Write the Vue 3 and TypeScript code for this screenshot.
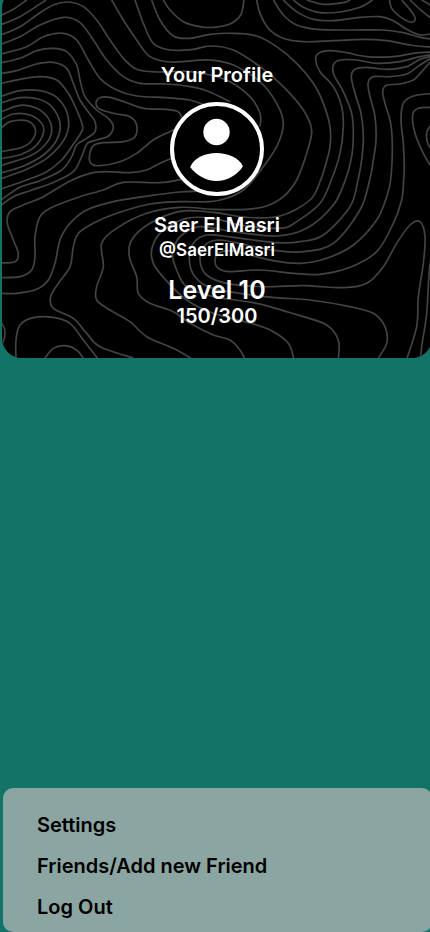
<script setup lang="ts">
type Point = [number, number]

interface Profile {
  name: string
  handle: string
  level: number
  points: number
  goal: number
}

const profile: Profile = {
  name: 'Saer El Masri',
  handle: '@SaerElMasri',
  level: 10,
  points: 150,
  goal: 300,
}

const menu: string[] = ['Settings', 'Friends/Add new Friend', 'Log Out']

// Contour lines of the topographic backdrop, as "x,y" pairs.
const contours: string[] = [
  '0,48 40,28 80,0',
  '0,75 60,50 138,0',
  '0,106 60,80 110,45 160,15 205,6 250,20 290,60 330,120 370,175 410,208 470,216 560,214 630,225 690,245 750,290 780,340 780,380',
  '0,134 60,110 120,75 190,52 240,68 280,120 320,180 370,230 420,250 500,252 560,258 620,272 690,305',
  '0,163 80,140 130,110 190,100 230,120 265,180 300,235 350,270 410,288 500,293 570,300 620,318',
  '335,0 370,60 410,120 450,170 510,186 580,182 630,180 700,195 780,245 830,310 850,370 830,440 775,520 730,570 680,595 630,605 540,605 450,612 350,640 280,670 235,700 220,740 210,800 175,850 152,890 160,925 220,955 260,1000 300,1040 400,1074',
  '405,0 430,70 460,130 510,150 580,148 630,138 700,150 780,200 850,260 910,330 935,390 920,460 890,540 850,590 800,618 740,628 640,628 540,622 440,640 350,685 305,730 310,800 290,860 290,900 330,930 390,965 440,1010 520,1045 578,1078',
  '455,0 480,60 520,108 570,115 630,103 700,100 770,108 830,140 890,190 940,250 970,310 990,380 990,440 975,500 962,540 930,600 840,648 740,652 640,637 540,634 450,670 395,720 388,770 410,830 415,880 450,910 520,935 570,970 640,1005 690,1020 720,1050 735,1078',
  '490,0 510,30 550,65 600,80 640,82 690,72 722,45 732,0',
  '770,0 780,40 805,85 850,115 910,125 1000,122 1090,118 1160,122 1230,135 1300,142',
  '820,0 850,45 890,75 950,88 1050,90 1150,90 1210,98 1260,112 1300,118',
  '850,0 890,35 940,58 1000,62 1080,52 1140,50 1180,62 1220,88 1260,105 1300,100',
  '880,0 910,22 960,38 1020,36 1080,22 1118,0',
  '920,0 970,13 1030,8 1050,0',
  '1168,0 1175,25 1200,50 1230,66 1246,58 1235,35 1205,0',
  '1230,0 1260,28 1300,60',
  '1265,0 1300,20',
  '1300,156 1240,160 1180,170 1100,170 1040,158 990,152 955,160 947,180 960,215 1000,260 1025,320 1030,380 1020,460 994,540 960,610 890,665 840,685 720,675 640,655 560,655 490,690 457,740 460,790 500,843 560,900 640,940 760,972 820,995 865,1030 882,1078',
  '1300,163 1250,172 1200,185 1130,190 1070,180 1020,180 1000,195 1002,225 1030,275 1055,340 1060,400 1055,470 1036,540 1000,615 920,685 830,708 700,695 600,680 540,710 518,760 530,810 560,860 640,890 770,910 910,950 980,975 1015,1020 1015,1078',
  '1300,168 1260,178 1220,200 1160,208 1100,202 1065,208 1054,230 1065,280 1083,340 1090,410 1085,480 1074,540 1050,620 970,705 900,725 830,728 700,712 620,705 580,730 568,780 585,830 640,865 795,890 930,900 1050,920 1120,940 1155,980 1160,1030 1132,1078',
  '1300,170 1260,195 1220,222 1170,230 1120,230 1104,250 1110,290 1125,350 1128,420 1120,480 1109,540 1080,630 1000,730 910,755 830,752 740,735 660,720 615,735 600,780 620,825 680,850 790,860 910,857 1030,863 1100,850 1150,800 1190,730 1230,675 1260,665 1275,710 1270,790 1255,890 1250,980 1220,1078',
  '1300,175 1265,215 1240,240 1200,252 1160,256 1148,275 1155,310 1172,370 1177,440 1172,540 1160,590 1130,660 1060,735 980,775 900,790 820,782 750,765 690,752 655,760 645,782 655,805 690,815 780,810 880,820 960,823 1050,802 1130,755 1180,670 1205,600 1211,540 1213,500 1210,430 1203,360 1210,310 1240,288 1300,280',
  '1300,322 1255,325 1238,345 1245,400 1270,460 1300,510',
  '1300,365 1281,395 1283,430 1300,455',
  '1300,740 1288,810 1280,940 1265,1040 1262,1078',
  '0,189 60,175 110,152 160,145 200,155 230,195 240,240 255,290 290,330 325,355 340,380 325,408 290,420 262,430 245,470 220,515 165,545 90,572 40,590 0,618',
  '0,221 50,212 110,192 160,187 200,205 220,250 240,300 268,340 285,365 285,395 260,415 230,435 215,470 185,510 120,542 60,562 0,602',
  '0,251 60,238 120,230 170,240 205,280 230,330 247,375 245,395 215,440 185,480 140,515 80,540 0,568',
  '0,290 60,272 120,272 170,292 200,335 205,385 185,430 140,475 80,508 0,537',
  '0,310 60,293 115,297 155,320 180,370 170,420 130,465 70,498 0,520',
  '0,337 60,316 110,325 145,355 155,395 135,435 90,468 0,497',
  '0,360 40,342 90,345 125,370 130,400 105,440 60,464 0,476',
  '0,388 30,365 80,362 105,385 100,415 70,440 0,456',
  '545,352 535,335 500,328 430,325 380,308 330,292 300,293 288,310 300,328 350,342 390,350 410,375 405,410 370,425 310,428 280,437 268,470 275,492 300,497 360,485 410,460 460,420 510,395 530,385',
  '515,475 480,490 440,510 390,518 320,515 270,520 210,543 130,590 70,615 30,635 22,670 40,720 55,760 45,785 0,789',
  '545,538 480,548 370,547 310,570 240,590 160,620 120,650 105,710 105,770 95,810 60,830 0,833',
  '660,572 540,576 430,590 340,605 260,630 210,670 180,720 165,790 145,840 110,868 50,880 0,880',
  '48,1078 48,1020 60,975 100,953 160,952 210,970 250,1020 295,1078',
  '132,1078 160,1045 195,1037 230,1050 252,1078',
  '0,962 13,985 14,1010 4,1040',
]

// Turns a list of points into a smooth Catmull-Rom curve.
function toPath(line: string): string {
  const pts = line.split(' ').map((pair) => pair.split(',').map(Number) as Point)
  let d = `M${pts[0].join(' ')}`
  for (let i = 0; i < pts.length - 1; i++) {
    const a = pts[Math.max(i - 1, 0)]
    const b = pts[i]
    const c = pts[i + 1]
    const e = pts[Math.min(i + 2, pts.length - 1)]
    const c1 = [b[0] + (c[0] - a[0]) / 6, b[1] + (c[1] - a[1]) / 6]
    const c2 = [c[0] - (e[0] - b[0]) / 6, c[1] - (e[1] - b[1]) / 6]
    d += `C${c1.join(' ')} ${c2.join(' ')} ${c.join(' ')}`
  }
  return d
}

const contourPaths: string[] = contours.map(toPath)
</script>

<template>
  <main class="page">
    <header class="hero">
      <svg class="topo" viewBox="6 -36 1290 1110" preserveAspectRatio="xMidYMax slice" aria-hidden="true">
        <path v-for="(d, i) in contourPaths" :key="i" :d="d" />
      </svg>
      <h1 class="title">Your Profile</h1>
      <svg class="avatar" viewBox="0 0 94 94" aria-hidden="true">
        <circle cx="47" cy="47" r="45" fill="#000" stroke="#fff" stroke-width="4" />
        <circle cx="46.5" cy="30" r="13.2" fill="#fff" />
        <path d="M20.5 64.5C24 56 35 51 46.5 51S69 56 72.500 63.500V65C67 73 57 79 46.5 79S26 73 20.5 65.500Z" fill="#fff" />
      </svg>
      <p class="name">{{ profile.name }}</p>
      <p class="handle">{{ profile.handle }}</p>
      <p class="level">Level {{ profile.level }}</p>
      <p class="points">{{ profile.points }}/{{ profile.goal }}</p>
    </header>
    <nav class="menu">
      <button v-for="item in menu" :key="item" type="button" class="item">{{ item }}</button>
    </nav>
  </main>
</template>

<style>
body {
  margin: 0;
  background: #127467;
}
</style>

<style scoped>
.page {
  display: flex;
  flex-direction: column;
  justify-content: space-between;
  box-sizing: border-box;
  min-height: 100vh;
  overflow: hidden;
  background: #127467;
  font-family: Inter, "Liberation Sans", sans-serif;
  font-weight: 600;
}

.hero {
  position: relative;
  display: flex;
  flex-direction: column;
  align-items: center;
  margin: -12px -2px 0 2px;
  padding: 75px 0 31px;
  border-radius: 20px;
  overflow: hidden;
  background: #000;
  color: #fff;
}

.topo {
  position: absolute;
  inset: 0;
  width: 100%;
  height: 100%;
  fill: none;
  stroke: #424443;
  stroke-width: 5;
}

.title,
.avatar,
.name,
.handle,
.level,
.points {
  position: relative;
  margin: 0;
}

.title,
.name {
  font-size: 20px;
  font-weight: inherit;
  line-height: 24px;
}

.avatar {
  width: 94px;
  height: 94px;
  margin: 15px 0 17px;
}

.handle {
  font-size: 17px;
  line-height: 26px;
}

.level {
  margin-top: 12px;
  font-size: 25px;
  line-height: 30px;
}

.points {
  font-size: 20px;
  line-height: 22px;
}

.menu {
  display: flex;
  flex-direction: column;
  align-items: flex-start;
  margin: 0 -2px 0 3px;
  padding: 17px 34px 4px;
  border-radius: 10px;
  background: #8ba6a2;
}

.item {
  padding: 0;
  border: 0;
  background: none;
  color: #000;
  font: inherit;
  font-size: 20px;
  line-height: 41px;
  cursor: pointer;
}
</style>
